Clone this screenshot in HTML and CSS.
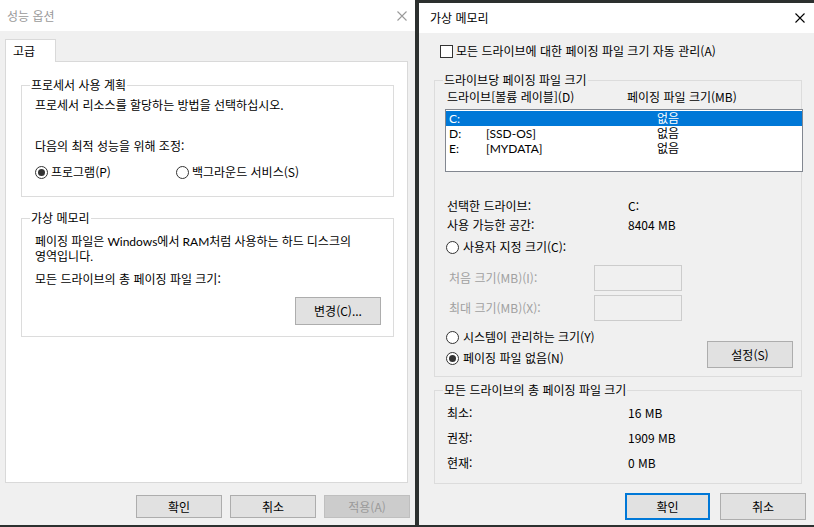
FILE: index.html
```html
<!DOCTYPE html>
<html lang="ko">
<head>
<meta charset="utf-8">
<title>성능 옵션 / 가상 메모리</title>
<link rel="stylesheet" href="styles.css">
</head>
<body>
<div class="desk">
  <section class="dlg dlg-perf">
    <header class="titlebar">
      <span class="title">성능 옵션</span>
      <svg class="close" viewBox="0 0 10 10"><path d="M0.5 0.5L9.5 9.5M9.5 0.5L0.5 9.5" stroke="currentColor" stroke-width="1.1" fill="none"/></svg>
    </header>
    <div class="perf-body">
      <div class="tabs"><div class="tab">고급</div></div>
      <div class="panel">
        <fieldset class="group g-proc">
          <legend>프로세서 사용 계획</legend>
          <div class="in">
            <p class="p-l1">프로세서 리소스를 할당하는 방법을 선택하십시오.</p>
            <p class="p-l2">다음의 최적 성능을 위해 조정:</p>
            <div class="radios">
              <label class="radio"><span class="rb on"></span>프로그램(P)</label>
              <label class="radio"><span class="rb"></span>백그라운드 서비스(S)</label>
            </div>
          </div>
        </fieldset>
        <fieldset class="group g-vmem">
          <legend>가상 메모리</legend>
          <div class="in">
            <p class="p-desc"><span class="tline">페이징 파일은 Windows에서 RAM처럼 사용하는 하드 디스크의</span><span class="tline">영역입니다.</span></p>
            <p class="p-total">모든 드라이브의 총 페이징 파일 크기:</p>
            <div class="change-row"><button class="btn btn-tall">변경(C)...</button></div>
          </div>
        </fieldset>
      </div>
      <div class="btnrow">
        <button class="btn">확인</button>
        <button class="btn">취소</button>
        <button class="btn disabled">적용(A)</button>
      </div>
    </div>
  </section>

  <section class="dlg dlg-vm">
    <header class="titlebar">
      <span class="title">가상 메모리</span>
      <svg class="close" viewBox="0 0 10 10"><path d="M0.5 0.5L9.5 9.5M9.5 0.5L0.5 9.5" stroke="currentColor" stroke-width="1.1" fill="none"/></svg>
    </header>
    <div class="vm-body">
      <label class="check-row"><span class="cb"></span>모든 드라이브에 대한 페이징 파일 크기 자동 관리(A)</label>
      <fieldset class="group g-drive">
        <legend>드라이브당 페이징 파일 크기</legend>
        <div class="list-head"><span>드라이브[볼륨 레이블](D)</span><span>페이징 파일 크기(MB)</span></div>
        <div class="listbox">
          <div class="lrow sel"><span>C:</span><span></span><span>없음</span></div>
          <div class="lrow"><span>D:</span><span>[SSD-OS]</span><span>없음</span></div>
          <div class="lrow"><span>E:</span><span>[MYDATA]</span><span>없음</span></div>
        </div>
        <div class="info">
          <span>선택한 드라이브:</span><span>C:</span>
          <span>사용 가능한 공간:</span><span>8404 MB</span>
        </div>
        <label class="radio vr custom"><span class="rb"></span>사용자 지정 크기(C):</label>
        <div class="sizes">
          <span class="dis">처음 크기(MB)(I):</span><span class="inp"></span>
          <span class="dis">최대 크기(MB)(X):</span><span class="inp"></span>
        </div>
        <div class="opt-row">
          <div class="opt-radios">
            <label class="radio vr"><span class="rb"></span>시스템이 관리하는 크기(Y)</label>
            <label class="radio vr second"><span class="rb on"></span>페이징 파일 없음(N)</label>
          </div>
          <button class="btn btn-set">설정(S)</button>
        </div>
      </fieldset>
      <fieldset class="group g-total">
        <legend>모든 드라이브의 총 페이징 파일 크기</legend>
        <div class="totals">
          <span>최소:</span><span>16 MB</span>
          <span>권장:</span><span>1909 MB</span>
          <span>현재:</span><span>0 MB</span>
        </div>
      </fieldset>
      <div class="btnrow vm-btns">
        <button class="btn big default">확인</button>
        <button class="btn big">취소</button>
      </div>
    </div>
  </section>
</div>
</body>
</html>
```

FILE: styles.css
```css
* { box-sizing: border-box; }
html, body { margin: 0; padding: 0; }
body {
  width: 814px;
  height: 527px;
  overflow: hidden;
  background: #2c302f;
  font-family: "Noto Sans CJK KR", "Noto Sans", sans-serif;
  font-size: 12px;
  line-height: 16px;
  color: #000;
}
p { margin: 0; }

.desk { display: flex; gap: 4px; align-items: flex-start; height: 527px; }

.dlg { background: #f0f0f0; display: flex; flex-direction: column; }
.dlg-perf { width: 415px; height: 525px; }
.dlg-vm { width: 395px; height: 522px; margin-top: 3px; }

.titlebar {
  flex: none;
  background: #fff;
  display: flex;
  align-items: center;
  justify-content: space-between;
}
.dlg-perf .titlebar { height: 31px; padding: 0 8px 0 7px; color: #9a9a9a; }
.dlg-vm .titlebar { height: 30px; padding: 0 9px 0 11px; color: #000; }
.close { width: 10px; height: 10px; display: block; }

/* ---------- left dialog ---------- */
.perf-body { flex: 1; padding: 8px 5px 0 5px; display: flex; flex-direction: column; }
.tabs { display: flex; height: 22px; }
.tab {
  position: relative;
  z-index: 1;
  width: 51px;
  height: 23px;
  padding-left: 7px;
  line-height: 22px;
  background: #fff;
  border: 1px solid #d9d9d9;
  border-bottom: none;
}
.panel {
  height: 422px;
  margin-right: 2px;
  background: #fff;
  border: 1px solid #d9d9d9;
  padding: 0 13px 0 15px;
}

.group {
  margin: 0;
  min-width: 0;
  border: 1px solid #dcdcdc;
  padding: 0 12px 0 8px;
}
.group legend { padding: 0 1px; line-height: 16px; }

.in { padding-left: 5px; }

.g-proc { margin-top: 15px; padding-bottom: 16px; }
.p-l1 { margin-top: 4px; }
.p-l2 { margin-top: 25px; }
.radios { margin-top: 10px; display: grid; grid-template-columns: 141px auto; }

.radio { display: flex; align-items: center; gap: 3px; line-height: 16px; }
.rb {
  width: 13px;
  height: 13px;
  border: 1px solid #333;
  border-radius: 50%;
  background: #fff;
  display: flex;
  align-items: center;
  justify-content: center;
  flex: none;
}
.rb.on::after {
  content: "";
  width: 7px;
  height: 7px;
  border-radius: 50%;
  background: #333;
}

.g-vmem { margin-top: 13px; padding-bottom: 11px; }
.p-desc { margin-top: 8px; }
.tline {
  display: block;
  height: 15px;
  line-height: 15px;
  white-space: nowrap;
  font-family: Lato, "Noto Sans CJK KR", sans-serif;
}
.p-total { margin-top: 7px; }
.change-row { margin-top: 10px; display: flex; justify-content: flex-end; }

.btn {
  font: inherit;
  color: #000;
  padding: 0;
  width: 86px;
  height: 23px;
  background: #e1e1e1;
  border: 1px solid #adadad;
  display: flex;
  align-items: center;
  justify-content: center;
}
.btn-tall { height: 28px; }
.btn.disabled { background: #cccccc; border-color: #bfbfbf; color: #9a9a9a; }

.btnrow { display: flex; justify-content: flex-end; gap: 8px; margin-top: 12px; }

/* ---------- right dialog ---------- */
.vm-body { flex: 1; padding: 10px 12px 0 15px; }
.check-row { display: flex; align-items: center; gap: 3px; margin-left: 6px; line-height: 16px; }
.cb { width: 13px; height: 13px; border: 1px solid #333; background: #fff; flex: none; }

.g-drive { width: 368px; margin-top: 13px; padding: 0 8px 8px 8px; }
.list-head { margin-top: 1px; padding-left: 4px; display: grid; grid-template-columns: 180px auto; }
.listbox {
  margin-top: 4px;
  margin-left: 2px;
  width: 358px;
  height: 63px;
  background: #fff;
  border: 1px solid #828790;
  padding-top: 1px;
}
.lrow {
  height: 15px;
  line-height: 15px;
  padding-left: 3px;
  display: grid;
  grid-template-columns: 37px 171px 1fr;
  font-family: Lato, "Noto Sans CJK KR", sans-serif;
}
.lrow span { white-space: nowrap; }
.lrow.sel { background: #0078d7; color: #fff; }

.info { margin-top: 24px; padding-left: 4px; display: grid; grid-template-columns: 181px auto; line-height: 19px; }

.radio.vr { gap: 4px; margin-left: 3px; }
.custom { margin-top: 5px; }

.sizes {
  margin-top: 10px;
  padding-left: 6px;
  display: grid;
  grid-template-columns: 145px 88px;
  row-gap: 4px;
  align-items: center;
}
.dis { color: #a0a0a0; }
.inp { height: 26px; background: #f0f0f0; border: 1px solid #cccccc; }

.opt-row { margin-top: 8px; display: flex; align-items: flex-start; }
.opt-radios { display: flex; flex-direction: column; }
.radio.second { margin-top: 5px; }
.btn-set { margin-left: auto; margin-top: 12px; height: 27px; }

.g-total { width: 368px; margin-top: 5px; padding: 0 8px 8px 8px; }
.totals {
  margin-top: 2px;
  padding-left: 4px;
  display: grid;
  grid-template-columns: 181px auto;
  grid-auto-rows: 25px;
  align-items: center;
}

.vm-btns { margin-top: 9px; gap: 10px; margin-right: -4px; }
.btn.big { height: 27px; }
.btn.default { width: 85px; border: 2px solid #0078d7; }
```
